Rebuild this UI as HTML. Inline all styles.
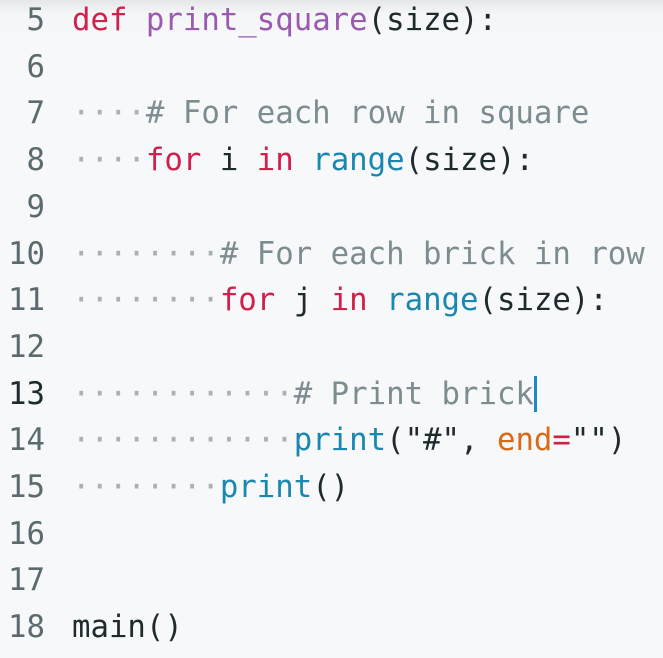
<!DOCTYPE html>
<html><head><meta charset="utf-8"><style>
html,body{margin:0;padding:0;width:663px;height:647px;overflow:hidden;background:#f6f8f9;}
body{background:linear-gradient(#e4e6e7 0,#f4f6f7 14px,#f6f8f9 40px);}
.wrap{position:absolute;top:-2px;left:0;width:663px;height:660px;font-family:"DejaVu Sans Mono","Liberation Mono",monospace;font-size:30.7px;line-height:46.7px;color:#1e2a2e;}
.ln{position:absolute;top:0;left:0;width:45px;text-align:right;color:#5b6a6e;white-space:pre;}
.code{position:absolute;top:0;left:72px;white-space:pre;}
.k{color:#d0204c}.f{color:#9a5ab0}.c{color:#7d8c90}.d{color:#a8b2b5}.b{color:#1a87b0}.o{color:#d86a18}
.cur{display:inline-block;width:3px;height:36px;background:#1a8cc0;vertical-align:-8px;}
</style></head><body><div class="wrap"><div class="ln">5
6
7
8
9
10
11
12
<span style="color:#1e2a2e">13</span>
14
15
16
17
18</div><div class="code"><span class="k">def</span> <span class="f">print_square</span>(size):

<span class="d">····</span><span class="c"># For each row in square</span>
<span class="d">····</span><span class="k">for</span> i <span class="k">in</span> <span class="b">range</span>(size):

<span class="d">········</span><span class="c"># For each brick in row</span>
<span class="d">········</span><span class="k">for</span> j <span class="k">in</span> <span class="b">range</span>(size):

<span class="d">············</span><span class="c"># Print brick</span><span class="cur"></span>
<span class="d">············</span><span class="b">print</span>("#", <span class="o">end</span><span class="k">=</span>"")
<span class="d">········</span><span class="b">print</span>()


main()</div></div></body></html>
